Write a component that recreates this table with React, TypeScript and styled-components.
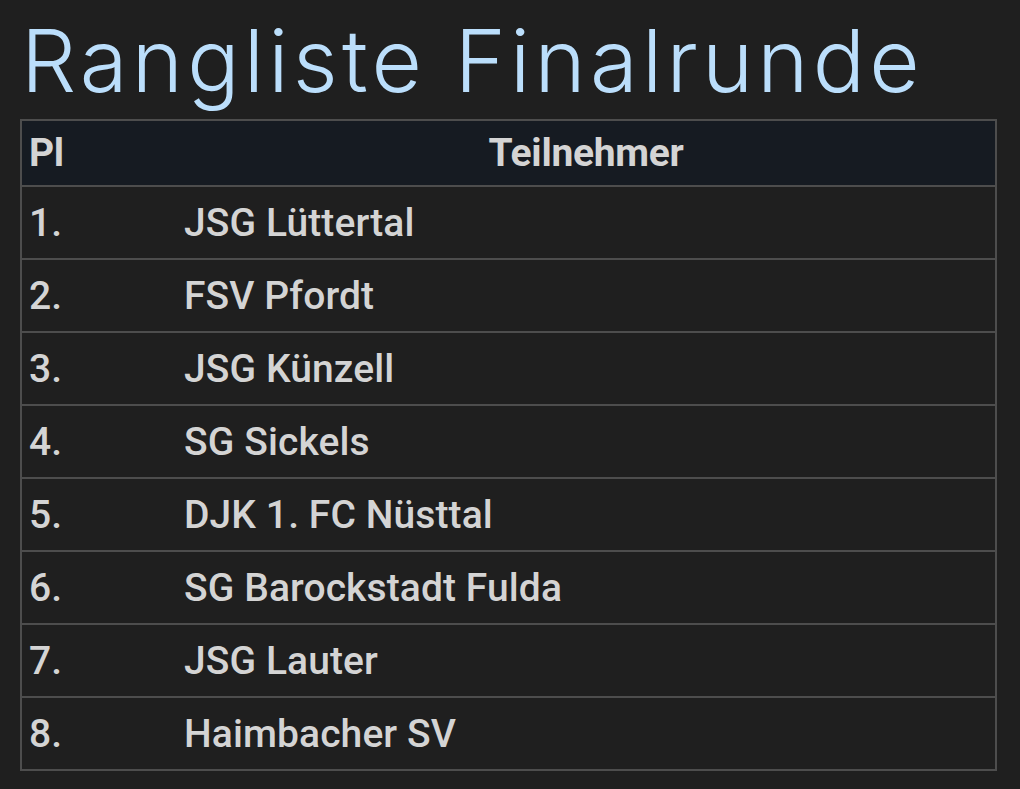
import React from "react";
import styled, { createGlobalStyle } from "styled-components";

const Global = createGlobalStyle`
  html, body { margin: 0; padding: 0; background: #1f1f1f; }
  body { font-family: Roboto, "Liberation Sans", sans-serif; }
`;

const Page = styled.div`
  padding: 0 23px 0 20px;
  width: 977px;
  box-sizing: content-box;
`;

const Title = styled.h1`
  margin: 0;
  padding: 16px 0 0 1px;
  height: 119px;
  box-sizing: border-box;
  font-family: Inter, "Open Sans", sans-serif;
  font-weight: 300;
  font-size: 87px;
  letter-spacing: 4.2px;
  line-height: 90px;
  color: #bbdefb;
  white-space: nowrap;
`;

const Table = styled.table`
  width: 977px;
  border-collapse: collapse;
  border: 2px solid #4d4d4d;
  color: #d4d4d4;
`;

const HeadRow = styled.tr`
  background: #161b22;
  border-bottom: 2px solid #4d4d4d;
`;

const Row = styled.tr`
  height: 73px;
  border-bottom: 2px solid #4d4d4d;
`;

const Th = styled.th<{ $align: "left" | "center"; $w?: number }>`
  text-align: ${(p) => p.$align};
  width: ${(p) => (p.$w ? `${p.$w}px` : "auto")};
  padding: 0 7px;
  height: 64px;
  font-size: 39px;
  font-weight: 700;
  letter-spacing: -0.3px;
`;

const Td = styled.td`
  padding: 0 7px;
  font-size: 39px;
  font-weight: 500;
  letter-spacing: 0.1px;
  vertical-align: middle;
`;

const teams = [
  "JSG Lüttertal",
  "FSV Pfordt",
  "JSG Künzell",
  "SG Sickels",
  "DJK 1. FC Nüsttal",
  "SG Barockstadt Fulda",
  "JSG Lauter",
  "Haimbacher SV",
];

export default function App() {
  return (
    <>
      <Global />
      <Page>
        <Title>Rangliste Finalrunde</Title>
        <Table>
          <thead>
            <HeadRow>
              <Th $align="left" $w={141}>Pl</Th>
              <Th $align="center">Teilnehmer</Th>
            </HeadRow>
          </thead>
          <tbody>
            {teams.map((t, i) => (
              <Row key={t}>
                <Td>{i + 1}.</Td>
                <Td>{t}</Td>
              </Row>
            ))}
          </tbody>
        </Table>
      </Page>
    </>
  );
}
